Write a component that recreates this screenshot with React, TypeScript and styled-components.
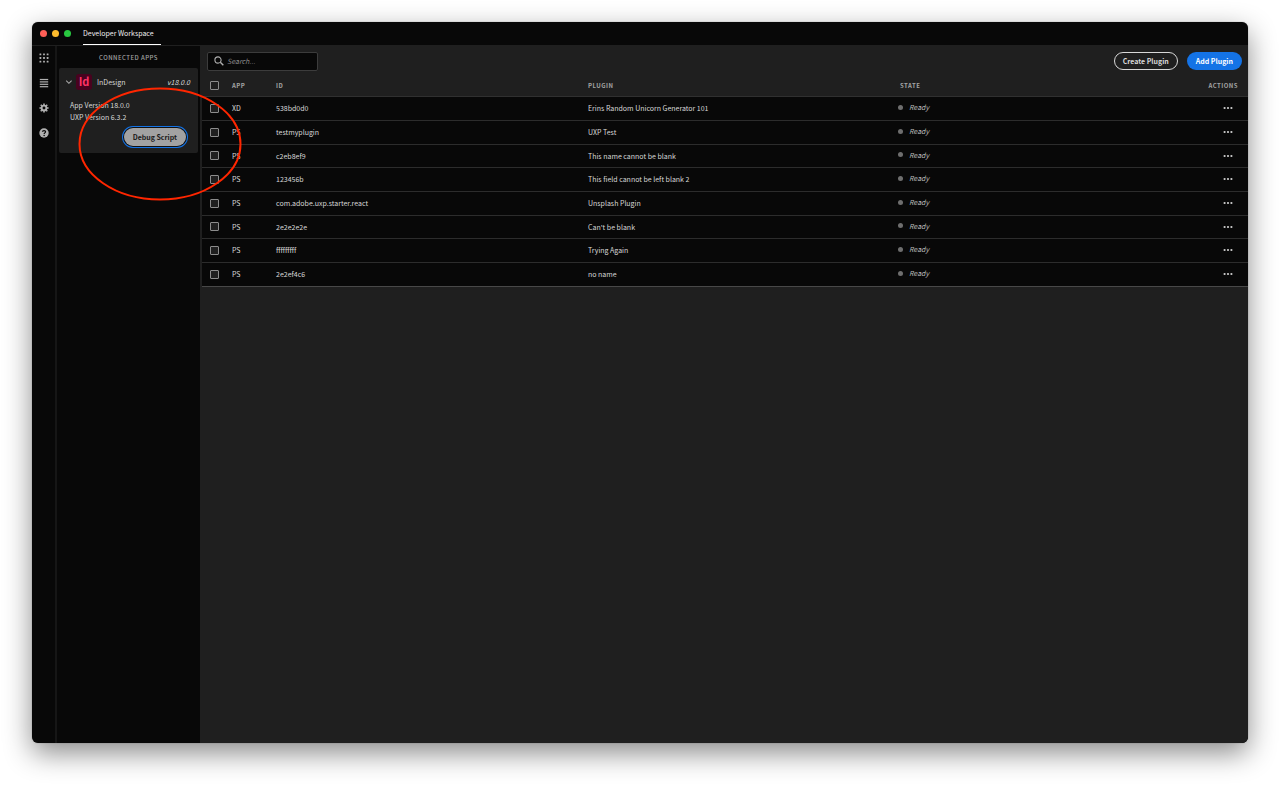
import React from 'react';
import styled, { createGlobalStyle, css } from 'styled-components';

const color = {
  ink: '#080808',
  panel: '#1f1f1f',
  line: '#2c2c2c',
  text: '#d8d8d8',
  muted: '#a4a4a4',
  icon: '#b0b0b0',
  accent: '#1473e6',
};

const GlobalStyle = createGlobalStyle`
  * { box-sizing: border-box; }
  body {
    margin: 0;
    background: #fff;
    color: ${color.text};
    font-family: "Noto Sans CJK JP", "Noto Sans", sans-serif;
    font-size: 7px;
    line-height: 12px;
  }
  button, input { font: inherit; color: inherit; margin: 0; }
  button { background: none; border: 0; padding: 0; cursor: pointer; }
`;

const Desktop = styled.div`
  display: flex;
  min-height: 100vh;
  padding: 22px 32px 43px;
`;

const Window = styled.div`
  flex: 1;
  min-width: 0;
  display: flex;
  flex-direction: column;
  overflow: hidden;
  border-radius: 6px;
  background: ${color.ink};
  box-shadow: 0 0 1px rgba(0, 0, 0, 0.5), 0 10px 28px rgba(0, 0, 0, 0.46);
`;

const TitleBar = styled.header`
  display: flex;
  height: 24px;
  padding-left: 8px;
  border-bottom: 1px solid ${color.panel};
`;

const Lights = styled.div`
  display: flex;
  align-items: center;
  gap: 5px;
  width: 43px;
  height: 22px;
`;

const Light = styled.span<{ $fill: string }>`
  width: 7px;
  height: 7px;
  border-radius: 50%;
  background: ${(p) => p.$fill};
`;

const Tab = styled.a`
  width: 78px;
  height: 23px;
  line-height: 22px;
  color: #f0f0f0;
  text-decoration: none;
  white-space: nowrap;
  border-bottom: 1px solid #fff;
`;

const Body = styled.div`
  flex: 1;
  display: flex;
`;

const Rail = styled.nav`
  display: flex;
  flex-direction: column;
  align-items: center;
  gap: 13px;
  width: 25px;
  padding: 6px 0 0 1px;
  border-right: 2px solid #161616;
`;

const RailButton = styled.button`
  width: 12px;
  height: 12px;
  color: ${color.icon};
  svg { display: block; }
`;

const Sidebar = styled.aside`
  width: 143px;
  padding: 0 2px;
`;

const capsLabel = css`
  font-size: 6px;
  font-weight: 700;
  letter-spacing: 0.08em;
  color: ${color.muted};
  text-transform: uppercase;
`;

const SidebarTitle = styled.h2`
  ${capsLabel}
  margin: 0;
  font-weight: 500;
  line-height: 24px;
  height: 22px;
  text-align: center;
`;

const Card = styled.section`
  height: 85px;
  border-radius: 2px;
  background: ${color.panel};
`;

const CardHead = styled.div`
  display: flex;
  align-items: center;
  height: 28px;
  padding: 0 8px 0 6px;
`;

const Toggle = styled.button`
  width: 11px;
  height: 8px;
  svg { display: block; }
`;

const AppLogo = styled.span`
  width: 16px;
  height: 16px;
  border-radius: 3px;
  background: #49021f;
  color: #ff3366;
  font-size: 11px;
  font-weight: 700;
  line-height: 14px;
  text-align: center;
`;

const AppName = styled.span`
  flex: 1;
  padding-left: 5px;
`;

const Details = styled.div`
  padding: 3px 11px 0;
  p { margin: 0; }
`;

const PillRow = styled.div`
  display: flex;
  justify-content: flex-end;
  padding-right: 1px;
  margin-top: 5px;
`;

const Pill = styled.button<{ $kind: 'outline' | 'accent' | 'focused' }>`
  height: 18px;
  padding: 0 9px;
  border-radius: 9px;
  font-weight: 700;
  line-height: 16px;
  white-space: nowrap;
  ${(p) => p.$kind === 'outline' && css`
    border: 1px solid #d8d8d8;
    padding: 0 8px;
    line-height: 14px;
    color: #d8d8d8;
  `}
  ${(p) => p.$kind === 'accent' && css`
    background: ${color.accent};
    color: #fff;
  `}
  ${(p) => p.$kind === 'focused' && css`
    background: #a2a2a2;
    color: #1a1a1a;
    box-shadow: 0 0 0 1px #101010, 0 0 0 2px ${color.accent};
  `}
`;

const Main = styled.main`
  flex: 1;
  min-width: 0;
  padding-left: 2px;
  background: ${color.panel};
`;

const Toolbar = styled.div`
  display: flex;
  align-items: center;
  gap: 9px;
  height: 30px;
  padding: 0 6px 0 5px;
`;

const SearchBox = styled.label`
  display: flex;
  align-items: center;
  gap: 3px;
  width: 111px;
  height: 19px;
  margin-right: auto;
  padding: 0 6px;
  border: 1px solid #3c3c3c;
  border-radius: 2px;
  background: ${color.ink};
  color: ${color.icon};
  svg { flex: none; }
`;

const SearchInput = styled.input`
  flex: 1;
  min-width: 0;
  padding: 0;
  border: 0;
  outline: 0;
  background: none;
  line-height: 12px;
  &::placeholder { color: #8a8a8a; font-style: italic; opacity: 1; }
`;

const Table = styled.table`
  width: 100%;
  table-layout: fixed;
  border-collapse: collapse;
`;

const Col = styled.col<{ $w?: number }>`
  ${(p) => p.$w && css`width: ${p.$w}px;`}
`;

const HeadCell = styled.th`
  ${capsLabel}
  height: 20px;
  padding: 0;
  text-align: left;
  border-bottom: 1px solid #303030;
`;

const Row = styled.tr`
  height: 24px;
  background: ${color.ink};
  border-bottom: 1px solid ${color.line};
  &:nth-child(3n) { height: 23px; }
  &:last-child { border-bottom-color: #484848; }
`;

const Cell = styled.td`
  padding: 0;
  white-space: nowrap;
`;

const EndCell = styled.div`
  display: flex;
  justify-content: flex-end;
  padding-right: 10px;
`;

const Check = styled.input`
  display: block;
  appearance: none;
  width: 9px;
  height: 9px;
  margin-left: 8px;
  border: 1px solid #8c8c8c;
  border-radius: 1px;
  background: ${color.panel};
`;

const State = styled.em`
  display: flex;
  align-items: center;
  gap: 6px;
  margin-left: -2px;
  padding-bottom: 2px;
  color: #b8b8b8;
  &::before {
    content: '';
    width: 5px;
    height: 5px;
    border-radius: 50%;
    background: #6e6e6e;
  }
`;

const MoreButton = styled.button`
  width: 10px;
  height: 8px;
  margin-right: 5px;
  svg { display: block; }
`;

const Annotation = styled.svg`
  position: absolute;
  left: 78px;
  top: 87px;
  pointer-events: none;
`;

const plugins = [
  ['XD', '538bd0d0', 'Erins Random Unicorn Generator 101'],
  ['PS', 'testmyplugin', 'UXP Test'],
  ['PS', 'c2eb8ef9', 'This name cannot be blank'],
  ['PS', '123456b', 'This field cannot be left blank 2'],
  ['PS', 'com.adobe.uxp.starter.react', 'Unsplash Plugin'],
  ['PS', '2e2e2e2e', "Can't be blank"],
  ['PS', 'fffffffff', 'Trying Again'],
  ['PS', '2e2ef4c6', 'no name'],
];

const GridIcon = () => (
  <svg width="12" height="12" viewBox="0 0 12 12" fill="currentColor">
    {[1.5, 5.1, 8.7].map((y) => [1.5, 5.1, 8.7].map((x) => (
      <rect key={`${x}-${y}`} x={x} y={y} width="1.8" height="1.8" rx="0.3" />
    )))}
  </svg>
);

const ListIcon = () => (
  <svg width="12" height="12" viewBox="0 0 12 12" fill="currentColor">
    {[1.9, 4.3, 6.7, 9.1].map((y) => <rect key={y} x="1.8" y={y} width="8.4" height="1.2" />)}
  </svg>
);

const GearIcon = () => (
  <svg width="12" height="12" viewBox="0 0 12 12" fill="none" stroke="currentColor">
    <circle cx="6" cy="6" r="2.4" strokeWidth="1.9" />
    {[0, 45, 90, 135, 180, 225, 270, 315].map((a) => (
      <path key={a} d="M6 3V1.4" strokeWidth="1.6" transform={`rotate(${a} 6 6)`} />
    ))}
  </svg>
);

const HelpIcon = () => (
  <svg width="12" height="12" viewBox="0 0 12 12">
    <circle cx="6" cy="6" r="4.7" fill="currentColor" />
    <path d="M4.4 4.7C4.5 3.2 7.6 3.1 7.6 4.8C7.6 5.9 6.1 5.9 6.1 7.1" fill="none" stroke={color.ink} strokeWidth="1.2" />
    <circle cx="6.1" cy="8.6" r="0.75" fill={color.ink} />
  </svg>
);

const rail = [
  ['Workspace', GridIcon],
  ['Logs', ListIcon],
  ['Settings', GearIcon],
  ['Help', HelpIcon],
] as const;

export default function App() {
  return (
    <>
      <GlobalStyle />
      <Desktop>
        <Window>
          <TitleBar>
            <Lights>
              <Light $fill="#ff5f57" />
              <Light $fill="#febc2e" />
              <Light $fill="#28c840" />
            </Lights>
            <Tab href="#workspace">Developer Workspace</Tab>
          </TitleBar>
          <Body>
            <Rail>
              {rail.map(([name, Icon]) => (
                <RailButton key={name} aria-label={name}><Icon /></RailButton>
              ))}
            </Rail>
            <Sidebar>
              <SidebarTitle>Connected apps</SidebarTitle>
              <Card>
                <CardHead>
                  <Toggle aria-label="Collapse InDesign">
                    <svg width="8" height="8" viewBox="0 0 8 8" fill="none" stroke="#a8a8a8" strokeWidth="1.1">
                      <path d="M1.2 2.6L3.9 5.3L6.6 2.6" />
                    </svg>
                  </Toggle>
                  <AppLogo>Id</AppLogo>
                  <AppName>InDesign</AppName>
                  <em>v18.0.0</em>
                </CardHead>
                <Details>
                  <p>App Version 18.0.0</p>
                  <p>UXP Version 6.3.2</p>
                  <PillRow><Pill $kind="focused">Debug Script</Pill></PillRow>
                </Details>
              </Card>
            </Sidebar>
            <Main>
              <Toolbar>
                <SearchBox>
                  <svg width="10" height="10" viewBox="0 0 10 10" fill="none" stroke="currentColor">
                    <circle cx="4" cy="4" r="3.1" strokeWidth="1.1" />
                    <path d="M6.3 6.3L9.3 9.3" strokeWidth="1.4" />
                  </svg>
                  <SearchInput placeholder="Search..." aria-label="Search" />
                </SearchBox>
                <Pill $kind="outline">Create Plugin</Pill>
                <Pill $kind="accent">Add Plugin</Pill>
              </Toolbar>
              <Table>
                <colgroup>
                  <Col $w={30} />
                  <Col $w={44} />
                  <Col />
                  <Col />
                  <Col />
                  <Col $w={36} />
                </colgroup>
                <thead>
                  <tr>
                    <HeadCell><Check type="checkbox" aria-label="Select all" /></HeadCell>
                    <HeadCell>App</HeadCell>
                    <HeadCell>ID</HeadCell>
                    <HeadCell>Plugin</HeadCell>
                    <HeadCell>State</HeadCell>
                    <HeadCell><EndCell>Actions</EndCell></HeadCell>
                  </tr>
                </thead>
                <tbody>
                  {plugins.map(([app, id, name]) => (
                    <Row key={id}>
                      <Cell><Check type="checkbox" aria-label={`Select ${id}`} /></Cell>
                      <Cell>{app}</Cell>
                      <Cell>{id}</Cell>
                      <Cell>{name}</Cell>
                      <Cell><State>Ready</State></Cell>
                      <Cell>
                        <EndCell>
                          <MoreButton aria-label={`Actions for ${id}`}>
                            <svg width="10" height="8" viewBox="0 0 10 8" fill="#d0d0d0">
                              <circle cx="1.6" cy="4" r="1.1" />
                              <circle cx="5" cy="4" r="1.1" />
                              <circle cx="8.4" cy="4" r="1.1" />
                            </svg>
                          </MoreButton>
                        </EndCell>
                      </Cell>
                    </Row>
                  ))}
                </tbody>
              </Table>
            </Main>
          </Body>
        </Window>
      </Desktop>
      <Annotation width="164" height="114" viewBox="0 0 164 114" fill="none" stroke="#ff2600" strokeWidth="2">
        <ellipse cx="82" cy="57" rx="80.5" ry="55.5" />
      </Annotation>
    </>
  );
}
